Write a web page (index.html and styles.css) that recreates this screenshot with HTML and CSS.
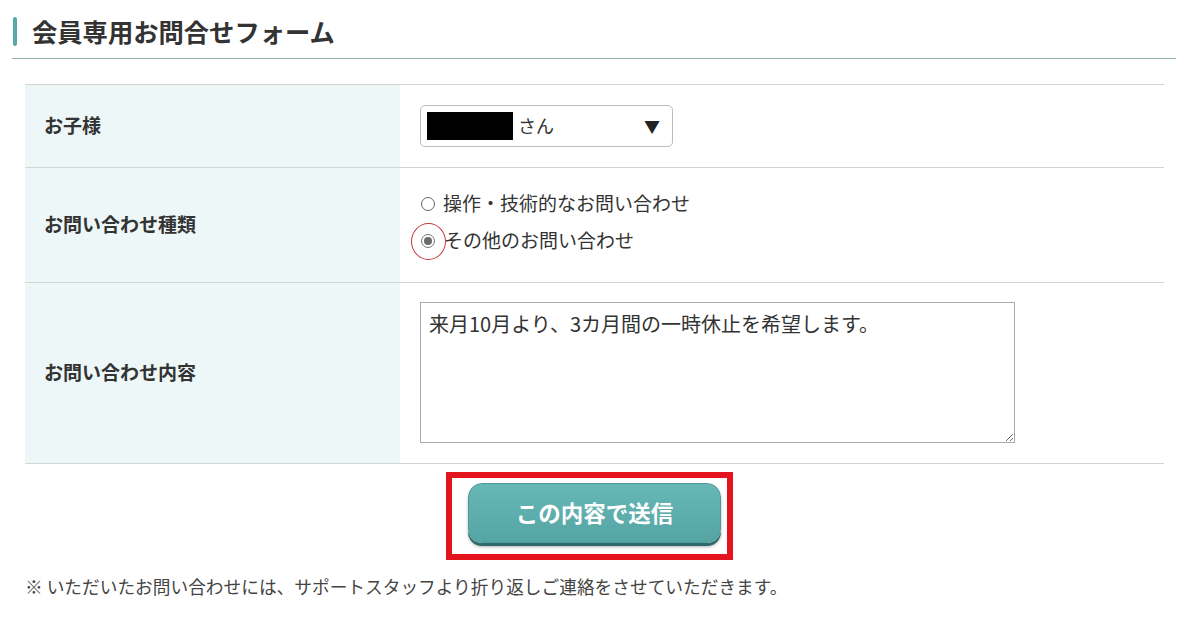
FILE: index.html
```html
<!DOCTYPE html>
<html lang="ja">
<head>
<meta charset="utf-8">
<title>会員専用お問合せフォーム</title>
<link rel="stylesheet" href="styles.css">
</head>
<body>
<h1 class="page-title">会員専用お問合せフォーム</h1>
<div class="form-table">
  <div class="row row-child">
    <div class="label">お子様</div>
    <div class="field">
      <div class="select">
        <span class="redact"></span>
        <span class="select-text">さん</span>
        <span class="select-arrow">▼</span>
      </div>
    </div>
  </div>
  <div class="row row-type">
    <div class="label">お問い合わせ種類</div>
    <div class="field radios">
      <div class="radio-item"><span class="radio"></span><span class="radio-text">操作・技術的なお問い合わせ</span></div>
      <div class="radio-item"><span class="radio checked"><span class="mark"></span></span><span class="radio-text">その他のお問い合わせ</span></div>
    </div>
  </div>
  <div class="row row-body">
    <div class="label">お問い合わせ内容</div>
    <div class="field">
      <textarea class="textarea">来月10月より、3カ月間の一時休止を希望します。</textarea>
    </div>
  </div>
</div>
<div class="submit-area">
  <div class="highlight">
    <button class="submit" type="button">この内容で送信</button>
  </div>
</div>
<p class="note">※ いただいたお問い合わせには、サポートスタッフより折り返しご連絡をさせていただきます。</p>
</body>
</html>
```
FILE: styles.css
```css
* { box-sizing: border-box; }
html, body { margin: 0; padding: 0; background: #fff; }
body {
  font-family: "Noto Sans CJK JP", "Noto Sans", sans-serif;
  color: #333;
  width: 1200px;
  height: 630px;
  overflow: hidden;
}
.page-title {
  margin: 0 24px 0 12px;
  padding: 17px 0 12px 1px;
  display: flex;
  align-items: center;
  gap: 15px;
  font-size: 25.3px;
  line-height: 29px;
  font-weight: 700;
  color: #333;
  border-bottom: 1px solid #8eafac;
}
.page-title::before {
  content: "";
  width: 4px;
  height: 29px;
  border-radius: 2px;
  background: #5aa7a9;
}
.form-table {
  margin: 25px 36px 0 25px;
  border-top: 1px solid #d4d4d4;
}
.row {
  display: grid;
  grid-template-columns: 375px 1fr;
  border-bottom: 1px solid #d4d4d4;
}
.label {
  background: #edf7f8;
  display: flex;
  align-items: center;
  padding-left: 19px;
  padding-bottom: 3px;
  font-size: 19px;
  font-weight: 700;
  color: #333;
}
.field { padding-left: 20px; }
.row-child .field { padding-top: 20px; padding-bottom: 20px; }
.select {
  width: 253px;
  height: 42px;
  border: 1px solid #bcbcbc;
  border-radius: 5px;
  display: flex;
  align-items: center;
  padding-left: 6px;
  padding-right: 12px;
  font-size: 18px;
  color: #333;
}
.redact {
  width: 86px;
  height: 28px;
  background: #000;
}
.select-text { margin-left: 5px; flex: 1; padding-bottom: 2px; }
.select-arrow { font-size: 16px; color: #222; }
.radios { padding-top: 17px; padding-bottom: 23px; }
.radio-item {
  display: flex;
  align-items: center;
  height: 37px;
  font-size: 19px;
  color: #333;
}
.radio-text { padding-bottom: 2px; }
.radio {
  position: relative;
  width: 14px;
  height: 14px;
  margin-left: 1px;
  margin-right: 8px;
  border: 1px solid #666;
  border-radius: 50%;
  background: #fff;
  display: flex;
  align-items: center;
  justify-content: center;
}
.radio.checked { border-color: #777; margin-right: 9px; }
.radio.checked .mark {
  width: 8px;
  height: 8px;
  border-radius: 50%;
  background: #6b6b6b;
}
.radio.checked::after {
  content: "";
  position: absolute;
  left: -11px;
  top: -12px;
  width: 33px;
  height: 35px;
  border: 1px solid #c8363c;
  border-radius: 50%;
}
.row-body .field { padding-top: 19px; padding-bottom: 20px; }
.textarea {
  display: block;
  width: 595px;
  height: 141px;
  border: 1px solid #aaa;
  padding: 6px 8px;
  font-family: "Noto Sans CJK JP", "Noto Sans", sans-serif;
  font-size: 20px;
  line-height: 30px;
  color: #333;
  resize: vertical;
}
.submit-area {
  display: flex;
  justify-content: center;
  margin: 8px 46px 0 25px;
}
.highlight {
  border: 6px solid #e3141b;
  padding: 5px 6px 11px 16px;
}
.submit {
  display: block;
  width: 253px;
  height: 60px;
  border: 1px solid #4f9a9a;
  border-radius: 14px;
  background: linear-gradient(#68b7b7, #56a5a5);
  box-shadow: 0 3px 0 #2e6a6a, 0 4px 3px rgba(0, 0, 0, 0.3);
  color: #fff;
  font-family: "Noto Sans CJK JP", "Noto Sans", sans-serif;
  font-size: 22.5px;
  font-weight: 700;
  padding: 0 0 2px;
}
.note {
  margin: 14px 0 0 25px;
  font-size: 17.7px;
  line-height: 24px;
  color: #444;
}
```
